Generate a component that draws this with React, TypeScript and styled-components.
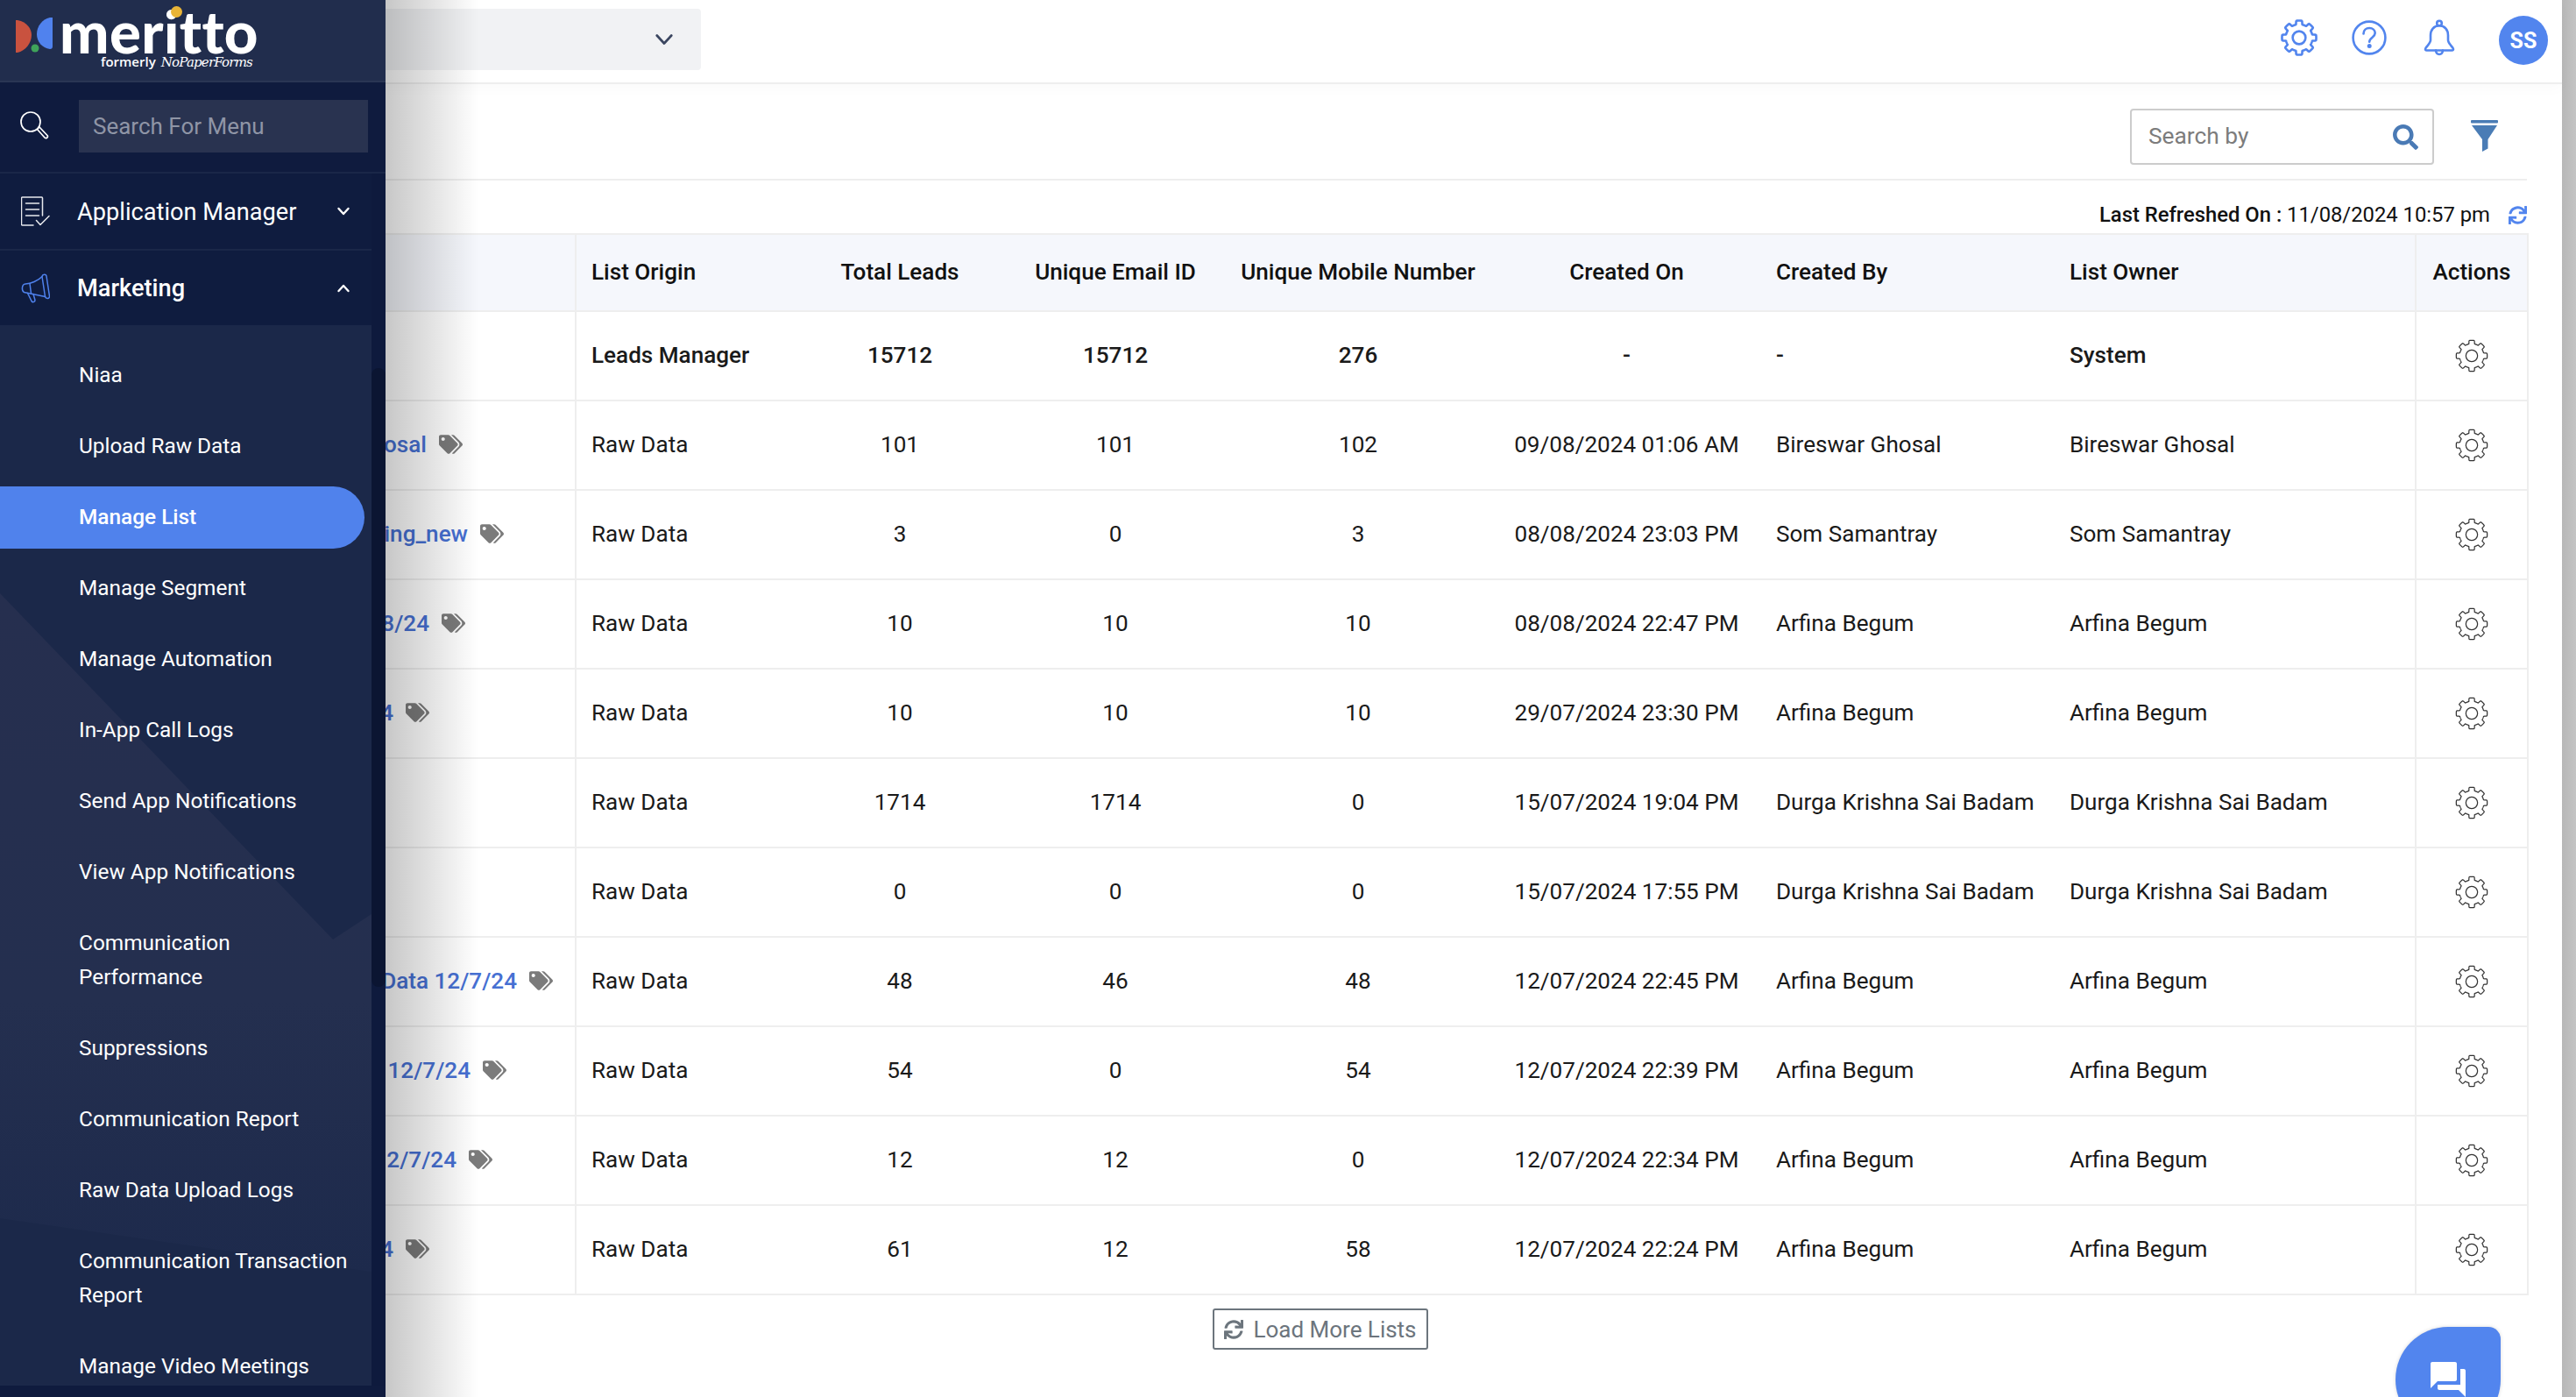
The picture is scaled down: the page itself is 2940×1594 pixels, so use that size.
import React from "react";
import styled, { createGlobalStyle } from "styled-components";
import { FaSearch, FaSync, FaTags } from "react-icons/fa";
import { MdQuestionAnswer } from "react-icons/md";

const Global = createGlobalStyle`
  html, body { margin: 0; padding: 0; background: #fff; overflow: hidden; }
  * { box-sizing: border-box; }
  body { font-family: Roboto, "Liberation Sans", sans-serif; color: #1c1c1c; }
`;

const Page = styled.div`
  position: relative; width: 2940px; height: 1594px; overflow: hidden; display: flex; background: #fff;
`;
const Main = styled.main`
  flex: 1; min-width: 0; display: flex; flex-direction: column; position: relative;
`;
const PageScrollbar = styled.div`
  width: 16px; height: 100%; background: linear-gradient(to right, #b7b7b7, #c4c4c4);
`;

/* ---------- top bar ---------- */
const TopBar = styled.header`
  height: 96px; border-bottom: 2px solid #eeeeee; display: flex; align-items: flex-start;
  justify-content: space-between; padding-right: 16px; box-shadow: 0 6px 14px rgba(0,0,0,.02);
`;
const SelectBox = styled.div`
  width: 600px; height: 70px; margin: 10px 0 0 200px; background: #f1f2f4; border-radius: 4px;
  display: flex; align-items: center; justify-content: flex-end; padding-right: 30px;
`;
const TopActions = styled.div`
  display: flex; align-items: center; height: 92px;
`;
const TopIcon = styled.div`
  width: 80px; display: flex; justify-content: center; align-items: center; height: 92px; padding-bottom: 6px;
`;
const Avatar = styled.div`
  width: 56px; height: 56px; margin-left: 28px; border-radius: 50%; background: #5285ee; color: #fff;
  display: flex; align-items: center; justify-content: center; font-size: 25px; font-weight: 700;
`;

/* ---------- content ---------- */
const Content = styled.div`
  padding: 0 40px 0 60px; display: flex; flex-direction: column; flex: 1;
`;
const FilterRow = styled.div`
  height: 110px; border-bottom: 2px solid #eeeeee; display: flex; align-items: flex-start;
  justify-content: flex-end; padding: 28px 33px 0 0; gap: 42px;
`;
const SearchField = styled.div`
  width: 347px; height: 64px; border: 2px solid #cccccc; border-radius: 4px; display: flex; align-items: center;
  justify-content: space-between; padding: 0 16px 0 19px; color: #7c7c7c; font-size: 26.3px;
  span { padding-bottom: 2px; }
`;
const FunnelWrap = styled.div`
  height: 64px; display: flex; align-items: center; padding-bottom: 2px;
`;
const RefreshedRow = styled.div`
  height: 60px; display: flex; justify-content: flex-end; align-items: center; padding-top: 18px;
  gap: 21px; font-size: 23.8px; overflow: hidden; color: #111;
`;
const RefreshedLabel = styled.span`
  font-weight: 500;
`;
const BlueSync = styled(FaSync)`
  color: #5285ee; width: 21px; height: 21px;
`;

/* ---------- table ---------- */
const Table = styled.table`
  width: 2824px; table-layout: fixed; border-collapse: separate; border-spacing: 0;
  border-top: 2px solid #eeeeee; border-right: 2px solid #eeeeee; font-size: 26.1px;
`;
const Col = styled.col<{ $w: number }>`
  width: ${(p) => p.$w}px;
`;
const Th = styled.th<{ $align?: string; $line?: boolean }>`
  height: 88px; background: #f5f7fc; border-bottom: 2px solid #eeeeee; font-weight: 500; color: #111;
  padding: 0 17px 2px; white-space: nowrap;
  text-align: ${(p) => p.$align || "left"};
  ${(p) => (p.$line ? "border-left: 2px solid #eeeeee;" : "")}
`;
const Td = styled.td<{ $align?: string; $line?: boolean; $bold?: boolean }>`
  height: 102px; border-bottom: 2px solid #eeeeee; padding: 0 17px 3px; white-space: nowrap; color: #1a1a1a;
  text-align: ${(p) => p.$align || "left"};
  font-weight: ${(p) => (p.$bold ? 500 : 400)};
  ${(p) => (p.$line ? "border-left: 2px solid #eeeeee;" : "")}
`;
const ActionCell = styled.td`
  height: 102px; border-bottom: 2px solid #eeeeee; border-left: 2px solid #eeeeee; padding: 0;
  svg { display: block; margin: 0 auto; }
`;
const NameCell = styled.td`
  height: 102px; border-bottom: 2px solid #eeeeee; padding: 0 0 3px;
`;
const NameFlow = styled.div<{ $w: number }>`
  width: ${(p) => p.$w + 41}px; display: flex; justify-content: flex-end; align-items: center; gap: 14px;
  white-space: nowrap;
`;
const NameLink = styled.a`
  color: #4670d3; font-weight: 500;
`;
const Tag = styled(FaTags)`
  width: 27px; height: 22px; color: #7b7b7b; flex: none;
`;
const Footer = styled.div`
  display: flex; justify-content: center; padding: 15px 0 0 70px;
`;
const LoadMore = styled.button`
  width: 246px; height: 47px; background: #fff; border: 2px solid #6c757d; border-radius: 3px; color: #6c757d;
  font: 400 26px Roboto, sans-serif; display: flex; align-items: center; justify-content: center; gap: 11px;
  padding: 0;
`;
const GreySync = styled(FaSync)`
  width: 22px; height: 22px;
`;
const ChatBubble = styled.div`
  position: absolute; left: 2734px; top: 1514px; width: 120px; height: 120px; background: #5285ee;
  border-radius: 60px 14px 60px 60px; display: flex; align-items: center; justify-content: center;
  box-shadow: 0 0 4px rgba(0,0,0,.15); color: #fff;
`;

/* ---------- sidebar ---------- */
const Sidebar = styled.aside`
  position: absolute; left: 0; top: 0; width: 440px; height: 1594px; background: #0f1b3e;
  display: flex; flex-direction: column; z-index: 3;
  &::after {
    content: ""; position: absolute; left: 100%; top: 0; width: 106px; height: 100%;
    background: linear-gradient(to right, rgba(0,0,0,.22), rgba(0,0,0,.12) 45%, rgba(0,0,0,0));
    pointer-events: none;
  }
`;
const LogoBlock = styled.div`
  height: 94px; background: #212d4d; border-bottom: 2px solid #2a3654; position: relative; flex: none;
`;
const LogoWord = styled.div`
  position: absolute; left: 68px; top: 8px; font: 900 67px/54px Lato, sans-serif; color: #fff; letter-spacing: .4px;
`;
const LogoSub = styled.div`
  position: absolute; left: 115px; top: 62px; display: flex; gap: 6px; align-items: baseline; color: #fff;
  font: 600 15px/16px "Open Sans", sans-serif;
`;
const LogoScript = styled.span`
  font: italic 400 15px/16px "DejaVu Serif", serif; letter-spacing: -.8px;
`;
const SearchBlock = styled.div`
  height: 104px; flex: none; display: flex; align-items: center; padding: 0 20px 2px 23px; gap: 34px;
  border-bottom: 2px solid #1a2748;
`;
const MenuSearch = styled.div`
  flex: 1; height: 60px; background: #293350; color: #8f95a6; font-size: 26px; display: flex; align-items: center;
  padding-left: 16px;
`;
const NavArea = styled.div`
  flex: 1; min-height: 0; display: flex; position: relative;
`;
const Nav = styled.nav`
  width: 424px; display: flex; flex-direction: column; overflow: hidden;
`;
const NavTrack = styled.div`
  width: 16px; position: relative; background: #0e1a3d;
`;
const NavThumb = styled.div`
  position: absolute; left: 0; top: 222px; width: 16px; height: 706px; border-radius: 8px; background: #0b1532;
`;
const Section = styled.div<{ $h: number; $border?: boolean }>`
  height: ${(p) => p.$h}px; flex: none; display: flex; align-items: center; padding: 0 24px; background: #0f1c3f;
  ${(p) => (p.$border ? "border-bottom: 2px solid #1a2748;" : "")}
`;
const SectionIcon = styled.div`
  width: 33px; height: 34px; margin-right: 31px; display: flex;
`;
const SectionLabel = styled.span<{ $bold?: boolean }>`
  font-size: 27.200px; color: #fff; font-weight: ${(p) => (p.$bold ? 500 : 400)}; flex: 1; padding-top: 1px;
`;
const SubMenu = styled.ul`
  list-style: none; margin: 0; padding: 22px 8px 0 0; flex: 1; min-height: 0; overflow: hidden; background: #1b2849;
  position: relative;
`;
const SubArt = styled.svg`
  position: absolute; left: 0; top: 0; width: 424px; height: 1210px;
`;
const SubItem = styled.li<{ $active?: boolean }>`
  position: relative; margin: 0 0 10px; padding: 15px 8px 17px 90px; font-size: 24.400px; line-height: 39px; color: #fff;
  border-radius: 0 36px 36px 0;
  background: ${(p) => (p.$active ? "#5082ec" : "transparent")};
  font-weight: ${(p) => (p.$active ? 500 : 400)};
`;
const SectionFooter = styled.div`
  height: 13px; flex: none; background: #0f1b3e;
`;
const LogoDot = styled.span`
  position: absolute; left: 195px; top: 7px; width: 13px; height: 13px; border-radius: 50%; background: #e9b437;
`;

/* ---------- drawings ---------- */
function gearPath(c: number, R: number, r: number, n = 8) {
  const pts: string[] = [];
  const steps = 240;
  for (let i = 0; i < steps; i++) {
    const t = (i / steps) * Math.PI * 2;
    let s = (Math.cos(n * t) + 0.05) * 1.5 + 0.5;
    s = Math.max(0, Math.min(1, s));
    s = s * s * (3 - 2 * s);
    const rad = r + (R - r) * s;
    pts.push(`${(c + rad * Math.sin(t)).toFixed(2)} ${(c - rad * Math.cos(t)).toFixed(2)}`);
  }
  return "M" + pts.join("L") + "Z";
}

const Gear = ({ size, color, width }: { size: number; color: string; width: number }) => (
  <svg width={size} height={size} viewBox="0 0 40 40" fill="none" stroke={color} strokeWidth={width}>
    <path d={gearPath(20, 18.6, 14.6)} strokeLinejoin="round" />
    <circle cx="20" cy="20" r="7" />
  </svg>
);

const HelpIcon = () => (
  <svg width="40" height="40" viewBox="0 0 40 40" fill="none" stroke="#5285ee" strokeWidth="2.6" strokeLinecap="round">
    <circle cx="20" cy="20" r="18.4" />
    <path d="M13.5 15.5c0-4 3-6.5 6.7-6.5s6.5 2.4 6.5 5.8c0 4.800-6.500 5-6.500 10" />
    <circle cx="20.200" cy="29.500" r="1.200" fill="#5285ee" />
  </svg>
);

const BellIcon = () => (
  <svg width="36" height="42" viewBox="0 0 36 42" fill="none" stroke="#5285ee" strokeWidth="2.6" strokeLinecap="round" strokeLinejoin="round">
    <circle cx="18" cy="4.500" r="2.800" />
    <path d="M18 7.300c-6.500 0-10 5-10 11v5.500c0 3-3 5.500-5.500 9-1 1.700-.2 2.700 1.200 2.700h28.600c1.400 0 2.200-1 1.200-2.700-2.500-3.500-5.500-6-5.500-9V18.300c0-6-3.500-11-10-11z" />
    <path d="M14 35.500c.3 3.200 2 4.500 4 4.500s3.700-1.300 4-4.500" />
  </svg>
);

const Chevron = ({ up, color, size, width }: { up?: boolean; color: string; size: number; width: number }) => (
  <svg width={size} height={size} viewBox="0 0 16 16" fill="none" stroke={color} strokeWidth={width} strokeLinecap="round" strokeLinejoin="round">
    <path d={up ? "M2.500 11L8 5l5.500 6" : "M2.500 5L8 11l5.500-6"} />
  </svg>
);

const Funnel = () => (
  <svg width="31" height="36" viewBox="0 0 31 36" fill="#4a7cb5">
    <rect x="0" y="0" width="31" height="3.500" rx="1" />
    <path d="M1 6h29L19.500 22v10.500L13 36V22z" />
  </svg>
);

const MenuGlass = () => (
  <svg width="33" height="34" viewBox="0 0 33 34" fill="none" stroke="#fff" strokeWidth="1.700">
    <circle cx="12" cy="12" r="11" />
    <path d="M19.500 20.500l2.500-2.500 9 9.500c1.400 1.700-1.200 4.200-2.800 2.700z" strokeLinejoin="round" />
  </svg>
);

const DocIcon = () => (
  <svg width="33" height="34" viewBox="0 0 33 34" fill="none" stroke="#e8e9ee" strokeWidth="1.500" strokeLinecap="round" strokeLinejoin="round">
    <path d="M24.500 22V2a1 1 0 0 0-1-1H1.500a1 1 0 0 0-1 1v30a1 1 0 0 0 1 1h12.500" />
    <path d="M5.500 8h15M5.500 15h15M5.500 22h15" />
    <path d="M17.500 27.500l4.500 5 10-10" />
  </svg>
);

const MegaphoneIcon = () => (
  <svg width="33" height="34" viewBox="0 0 33 34" fill="none" stroke="#4f82ed" strokeWidth="1.500" strokeLinecap="round" strokeLinejoin="round">
    <path d="M24 3.500c.5-2.700 4.500-3 5-.5l3.500 23c.3 3-4 3.400-5 .5z" />
    <path d="M24 3.500c-4.500 5-13 8-19 8.500-4.500.5-4.500 8-1.500 9.500L27.500 26.500" />
    <path d="M10 11.500l1.500 11.500" />
    <path d="M7.500 22.500l4.500 9c1.400 2.300 4.500.8 3.800-1.800L14 23.500" />
  </svg>
);

const LogoMark = () => (
  <svg style={{ position: "absolute", left: 0, top: 0 }} width="70" height="94" viewBox="0 0 70 94">
    <path d="M18 23h2c11 2 16 10 16 17 0 9-7 18-16 20h-2z" fill="#c9523f" />
    <path d="M60 20v33c0 2-1 3-3 3-9-1-15-9-15-17 0-9 6-17 15-19z" fill="#5082ee" />
    <circle cx="40" cy="55" r="4.500" fill="#3fa35a" />
  </svg>
);

const menu = [
  "Niaa", "Upload Raw Data", "Manage List", "Manage Segment", "Manage Automation", "In-App Call Logs",
  "Send App Notifications", "View App Notifications", "Communication Performance", "Suppressions",
  "Communication Report", "Raw Data Upload Logs", "Communication Transaction Report", "Manage Video Meetings",
];

type Row = {
  name?: string; end?: number; origin: string; total: string; email: string; mobile: string;
  on: string; by: string; owner: string; bold?: boolean;
};
const rows: Row[] = [
  { origin: "Leads Manager", total: "15712", email: "15712", mobile: "276", on: "-", by: "-", owner: "System", bold: true },
  { name: "osal", end: 427, origin: "Raw Data", total: "101", email: "101", mobile: "102", on: "09/08/2024 01:06 AM", by: "Bireswar Ghosal", owner: "Bireswar Ghosal" },
  { name: "ing_new", end: 474, origin: "Raw Data", total: "3", email: "0", mobile: "3", on: "08/08/2024 23:03 PM", by: "Som Samantray", owner: "Som Samantray" },
  { name: "8/24", end: 430, origin: "Raw Data", total: "10", email: "10", mobile: "10", on: "08/08/2024 22:47 PM", by: "Arfina Begum", owner: "Arfina Begum" },
  { name: "4", end: 389, origin: "Raw Data", total: "10", email: "10", mobile: "10", on: "29/07/2024 23:30 PM", by: "Arfina Begum", owner: "Arfina Begum" },
  { origin: "Raw Data", total: "1714", email: "1714", mobile: "0", on: "15/07/2024 19:04 PM", by: "Durga Krishna Sai Badam", owner: "Durga Krishna Sai Badam" },
  { origin: "Raw Data", total: "0", email: "0", mobile: "0", on: "15/07/2024 17:55 PM", by: "Durga Krishna Sai Badam", owner: "Durga Krishna Sai Badam" },
  { name: "Data 12/7/24", end: 530, origin: "Raw Data", total: "48", email: "46", mobile: "48", on: "12/07/2024 22:45 PM", by: "Arfina Begum", owner: "Arfina Begum" },
  { name: "12/7/24", end: 477, origin: "Raw Data", total: "54", email: "0", mobile: "54", on: "12/07/2024 22:39 PM", by: "Arfina Begum", owner: "Arfina Begum" },
  { name: "2/7/24", end: 461, origin: "Raw Data", total: "12", email: "12", mobile: "0", on: "12/07/2024 22:34 PM", by: "Arfina Begum", owner: "Arfina Begum" },
  { name: "4", end: 389, origin: "Raw Data", total: "61", email: "12", mobile: "58", on: "12/07/2024 22:24 PM", by: "Arfina Begum", owner: "Arfina Begum" },
];

const widths = [596, 249, 244, 248, 306, 307, 335, 411, 128];

export default function App() {
  return (
    <Page>
      <Global />
      <Main>
        <TopBar>
          <SelectBox>
            <Chevron color="#3b4660" size={24} width={1.800} />
          </SelectBox>
          <TopActions>
            <TopIcon><Gear size={42} color="#5285ee" width={2.500} /></TopIcon>
            <TopIcon><HelpIcon /></TopIcon>
            <TopIcon><BellIcon /></TopIcon>
            <Avatar>SS</Avatar>
          </TopActions>
        </TopBar>
        <Content>
          <FilterRow>
            <SearchField>
              <span>Search by</span>
              <FaSearch size={29} color="#4a7ab5" />
            </SearchField>
            <FunnelWrap><Funnel /></FunnelWrap>
          </FilterRow>
          <RefreshedRow>
            <span><RefreshedLabel>Last Refreshed On :</RefreshedLabel> 11/08/2024 10:57 pm</span>
            <BlueSync />
          </RefreshedRow>
          <Table>
            <colgroup>
              {widths.map((w, i) => <Col key={i} $w={w} />)}
            </colgroup>
            <thead>
              <tr>
                <Th />
                <Th $line>List Origin</Th>
                <Th $align="center">Total Leads</Th>
                <Th $align="center">Unique Email ID</Th>
                <Th $align="center">Unique Mobile Number</Th>
                <Th $align="center">Created On</Th>
                <Th>Created By</Th>
                <Th>List Owner</Th>
                <Th $line $align="center">Actions</Th>
              </tr>
            </thead>
            <tbody>
              {rows.map((r, i) => (
                <tr key={i}>
                  <NameCell>
                    {r.name ? (
                      <NameFlow $w={r.end ?? 0}>
                        <NameLink>{r.name}</NameLink>
                        <Tag />
                      </NameFlow>
                    ) : null}
                  </NameCell>
                  <Td $line $bold={r.bold}>{r.origin}</Td>
                  <Td $align="center" $bold={r.bold}>{r.total}</Td>
                  <Td $align="center" $bold={r.bold}>{r.email}</Td>
                  <Td $align="center" $bold={r.bold}>{r.mobile}</Td>
                  <Td $align="center" $bold={r.bold}>{r.on}</Td>
                  <Td $bold={r.bold}>{r.by}</Td>
                  <Td $bold={r.bold}>{r.owner}</Td>
                  <ActionCell><Gear size={38} color="#333" width={1.300} /></ActionCell>
                </tr>
              ))}
            </tbody>
          </Table>
          <Footer>
            <LoadMore><GreySync />Load More Lists</LoadMore>
          </Footer>
        </Content>
        <ChatBubble><MdQuestionAnswer size={48} /></ChatBubble>
      </Main>
      <PageScrollbar />
      <Sidebar>
        <LogoBlock>
          <LogoMark />
          <LogoWord>meritto</LogoWord>
          <LogoDot />
          <LogoSub>formerly <LogoScript>NoPaperForms</LogoScript></LogoSub>
        </LogoBlock>
        <SearchBlock>
          <MenuGlass />
          <MenuSearch>Search For Menu</MenuSearch>
        </SearchBlock>
        <NavArea>
          <Nav>
            <Section $h={88} $border>
              <SectionIcon><DocIcon /></SectionIcon>
              <SectionLabel>Application Manager</SectionLabel>
              <Chevron color="#fff" size={16} width={2.400} />
            </Section>
            <Section $h={85}>
              <SectionIcon><MegaphoneIcon /></SectionIcon>
              <SectionLabel $bold>Marketing</SectionLabel>
              <Chevron up color="#fff" size={16} width={2.400} />
            </Section>
            <SubMenu>
              <SubArt viewBox="0 0 424 1210" preserveAspectRatio="none">
                <defs>
                  <linearGradient id="subGlow" x1="0" y1="0" x2="0" y2="1">
                    <stop offset="0" stopColor="#262f4f" />
                    <stop offset="0.6" stopColor="#242f4f" />
                    <stop offset="1" stopColor="#1d2a4c" />
                  </linearGradient>
                </defs>
                <path d="M0 306L380 701 424 672V1080L0 1019z" fill="url(#subGlow)" />
              </SubArt>
              {menu.map((m) => (
                <SubItem key={m} $active={m === "Manage List"}>{m}</SubItem>
              ))}
            </SubMenu>
          </Nav>
          <NavTrack><NavThumb /></NavTrack>
        </NavArea>
        <SectionFooter />
      </Sidebar>
    </Page>
  );
}
